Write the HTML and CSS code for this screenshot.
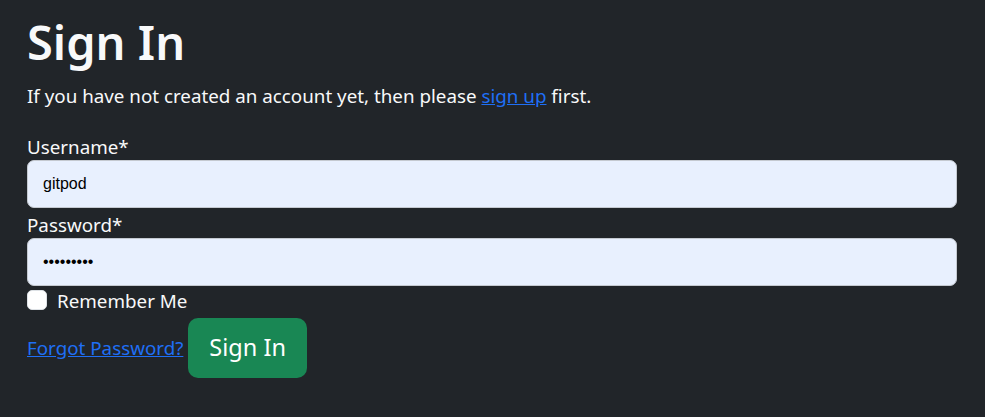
FILE: index.html
```html
<!DOCTYPE html>
<html lang="en">
<head>
<meta charset="utf-8">
<title>Sign In</title>
<link rel="stylesheet" href="styles.css">
</head>
<body>
<main class="container">
  <h1 class="title">Sign In</h1>
  <p class="lead-text">If you have not created an account yet, then please <a href="#" class="link">sign up</a> first.</p>
  <form class="form">
    <label class="label" for="username">Username*</label>
    <input class="input" id="username" type="text" value="gitpod">
    <label class="label" for="password">Password*</label>
    <input class="input" id="password" type="password" value="gitpod123">
    <div class="check-row">
      <input class="check" id="remember" type="checkbox">
      <label class="check-label" for="remember">Remember Me</label>
    </div>
    <div class="actions">
      <a href="#" class="link">Forgot Password?</a>
      <button type="button" class="btn">Sign In</button>
    </div>
  </form>
</main>
</body>
</html>
```

FILE: styles.css
```css
html, body {
  margin: 0;
  padding: 0;
  background: #212529;
  color: #f8f9fa;
  font-family: "Noto Sans", "Open Sans", sans-serif;
  font-size: 18.8px;
  line-height: 30px;
}
.container {
  padding: 0 28px 0 27px;
}
.title {
  margin: 0 0 10px 0;
  padding-top: 13px;
  font-size: 47px;
  font-weight: 600;
  line-height: 58px;
}
.lead-text {
  margin: 0 0 19px 0;
}
.link {
  color: #1f6ff5;
  text-decoration: underline;
}
.form {
  display: flex;
  flex-direction: column;
}
.label {
  display: block;
  padding-top: 4px;
  line-height: 26px;
}
.input {
  box-sizing: border-box;
  height: 48px;
  width: 100%;
  margin: 0;
  padding: 0 15px;
  border: 1px solid #c4c9d0;
  border-radius: 7px;
  background: #e8f0fe;
  color: #000;
  font-family: "Liberation Sans", Arial, sans-serif;
  font-size: 16px;
  outline: none;
}
.check-row {
  display: flex;
  align-items: center;
  height: 30px;
}
.check {
  appearance: none;
  -webkit-appearance: none;
  width: 20px;
  height: 20px;
  margin: -2px 10px 0 0;
  background: #fff;
  border: 1px solid #dee2e6;
  border-radius: 5px;
  box-sizing: border-box;
}
.actions {
  display: flex;
  align-items: center;
  gap: 5px;
  margin-top: 2px;
}
.btn {
  height: 60px;
  padding: 0 21px;
  border: none;
  border-radius: 10px;
  background: #198754;
  color: #fff;
  font-family: "Noto Sans", "Open Sans", sans-serif;
  font-size: 23.5px;
  line-height: 1.5;
}
```
